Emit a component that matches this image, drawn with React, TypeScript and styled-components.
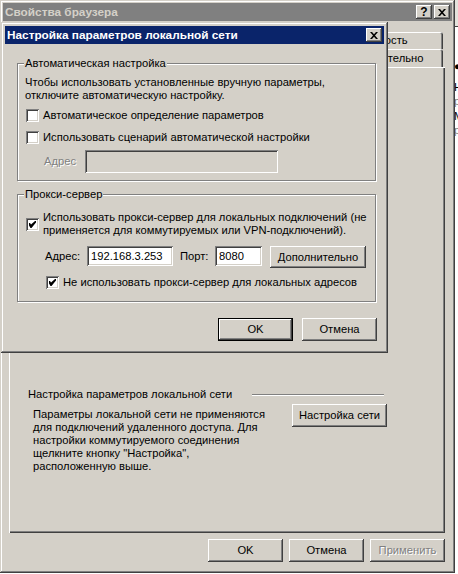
import styled, { createGlobalStyle } from "styled-components";

const FACE = "#d4d0c8";
const SHADOW = "#808080";
const DARK = "#404040";

const GlobalStyle = createGlobalStyle`
  * {
    box-sizing: border-box;
  }
  body {
    margin: 0;
    background: #ffffff;
    font-family: "Liberation Sans", Arial, sans-serif;
    font-size: 11.2px;
    line-height: 13px;
    color: #000;
  }
`;

const Desktop = styled.div`
  position: relative;
  display: flex;
  width: 458px;
  height: 574px;
  overflow: hidden;
`;

const Frame = styled.div<{ $w: number; $h: number }>`
  display: flex;
  flex-direction: column;
  flex: none;
  width: ${(p) => p.$w}px;
  height: ${(p) => p.$h}px;
  padding: 3px;
  background: ${FACE};
  box-shadow: inset -1px -1px ${DARK}, inset 1px 1px ${FACE},
    inset -2px -2px ${SHADOW}, inset 2px 2px #fff;
`;

const Dialog = styled(Frame)`
  position: absolute;
  left: 1px;
  top: 22px;
  padding: 4px;
`;

const TitleBar = styled.div<{ $active?: boolean }>`
  display: flex;
  align-items: center;
  height: 18px;
  padding: 0 2px;
  background: ${(p) => (p.$active ? "#0a246a" : SHADOW)};
  color: ${(p) => (p.$active ? "#fff" : FACE)};
  font-size: 11.8px;
  font-weight: bold;
`;

const TitleText = styled.span`
  flex: 1;
  white-space: nowrap;
  overflow: hidden;
`;

const TitleButtons = styled.div`
  display: flex;
  gap: 2px;
`;

const TitleButton = styled.div`
  display: flex;
  align-items: center;
  justify-content: center;
  width: 16px;
  height: 14px;
  background: ${FACE};
  color: #000;
  font-size: 12px;
  font-weight: bold;
  box-shadow: inset -1px -1px ${DARK}, inset 1px 1px #fff,
    inset -2px -2px ${SHADOW};
`;

const WindowBody = styled.div`
  flex: 1;
  display: flex;
  flex-direction: column;
  padding: 11px 7px 8px 6px;
`;

const TabRow = styled.div<{ $h: number }>`
  display: flex;
  height: ${(p) => p.$h}px;
  margin-right: 2px;
`;

const Tab = styled.div`
  flex: 1 1 auto;
  display: flex;
  align-items: center;
  justify-content: center;
  white-space: nowrap;
  border-radius: 3px 3px 0 0;
  box-shadow: inset 1px 1px #fff, inset -1px 0 ${DARK},
    inset -2px 0 ${SHADOW};
`;

const Panel = styled.div`
  flex: 1;
  display: flex;
  flex-direction: column;
  padding-top: 321px;
  box-shadow: inset 1px 1px #fff, inset -1px -1px ${DARK},
    inset -2px -2px ${SHADOW};
`;

const HeaderRow = styled.div`
  display: flex;
  align-items: center;
  width: 375px;
  padding-left: 19px;
  white-space: nowrap;
`;

const Etched = styled.div<{ $w: number }>`
  width: ${(p) => p.$w}px;
  height: 2px;
  margin-left: auto;
  border-top: 1px solid ${SHADOW};
  border-bottom: 1px solid #fff;
`;

const ContentRow = styled.div`
  display: flex;
  align-items: flex-start;
  margin-top: 3px;
  padding-left: 24px;
`;

const Paragraph = styled.div<{ $w: number }>`
  width: ${(p) => p.$w}px;
  margin-top: 4px;
  white-space: nowrap;
`;

const ButtonRow = styled.div<{ $mt: number; $gap: number; $w?: number }>`
  display: flex;
  justify-content: flex-end;
  gap: ${(p) => p.$gap}px;
  margin-top: ${(p) => p.$mt}px;
  width: ${(p) => (p.$w ? `${p.$w}px` : "auto")};
`;

const Button = styled.button<{ $w: number; $h?: number; $ml?: number; $default?: boolean }>`
  flex: none;
  width: ${(p) => p.$w}px;
  height: ${(p) => p.$h ?? 23}px;
  margin-left: ${(p) => p.$ml ?? 0}px;
  padding: 0;
  font: inherit;
  color: ${(p) => (p.disabled ? SHADOW : "#000")};
  text-shadow: ${(p) => (p.disabled ? "1px 1px #fff" : "none")};
  background: ${FACE};
  border: ${(p) => (p.$default ? "1px solid #000" : "none")};
  box-shadow: inset -1px -1px ${DARK}, inset 1px 1px #fff,
    inset -2px -2px ${SHADOW}, inset 2px 2px ${FACE};
`;

const DialogBody = styled.div`
  display: flex;
  flex-direction: column;
  width: 372px;
  padding: 13px 0 0 12px;
`;

const Group = styled.fieldset<{ $pt: number; $pb: number; $mt?: number }>`
  display: flex;
  flex-direction: column;
  align-items: flex-start;
  width: 359px;
  min-width: 0;
  margin: ${(p) => p.$mt ?? 0}px 0 0;
  padding: ${(p) => p.$pt}px 7px ${(p) => p.$pb}px;
  border: 1px solid ${SHADOW};
  box-shadow: inset 1px 1px #fff, 1px 1px #fff;
`;

const Legend = styled.legend`
  margin-left: -1px;
  padding: 0 1px;
  background: ${FACE};
  line-height: 13px;
`;

const Text = styled.div`
  white-space: nowrap;
`;

const CheckRow = styled.label<{ $mt: number; $indent: number }>`
  display: flex;
  align-items: center;
  gap: 4px;
  margin: ${(p) => p.$mt}px 0 0 ${(p) => p.$indent}px;
  white-space: nowrap;
`;

const Box = styled.span`
  display: flex;
  align-items: center;
  justify-content: center;
  flex: none;
  width: 13px;
  height: 13px;
  background: #fff;
  box-shadow: inset 1px 1px ${SHADOW}, inset -1px -1px #fff,
    inset 2px 2px ${DARK}, inset -2px -2px ${FACE};
`;

const FieldRow = styled.div<{ $mt: number; $indent: number }>`
  display: flex;
  align-items: flex-start;
  margin: ${(p) => p.$mt}px 0 0 ${(p) => p.$indent}px;
`;

const FieldLabel = styled.span<{ $w: number; $h: number; $ml?: number; $disabled?: boolean }>`
  display: flex;
  align-items: center;
  width: ${(p) => p.$w}px;
  height: ${(p) => p.$h}px;
  margin-left: ${(p) => p.$ml ?? 0}px;
  color: ${(p) => (p.$disabled ? SHADOW : "#000")};
  text-shadow: ${(p) => (p.$disabled ? "1px 1px #fff" : "none")};
`;

const Field = styled.input<{ $w: number; $h: number }>`
  width: ${(p) => p.$w}px;
  height: ${(p) => p.$h}px;
  padding: 0 4px;
  border: none;
  outline: none;
  font: inherit;
  color: #000;
  background: ${(p) => (p.disabled ? FACE : "#fff")};
  box-shadow: inset 1px 1px ${SHADOW}, inset -1px -1px #fff,
    inset 2px 2px ${DARK}, inset -2px -2px ${FACE};
`;

const Behind = styled.div`
  flex: 1;
  display: flex;
  flex-direction: column;
  overflow: hidden;
  background: #fff;
`;

const BehindTop = styled.div`
  height: 27px;
  background: #e4e2dc;
  border-bottom: 1px solid ${DARK};
`;

const BehindLine = styled.div<{ $mt: number; $color?: string }>`
  margin: ${(p) => p.$mt}px 0 0 -1px;
  white-space: nowrap;
  color: ${(p) => p.$color ?? "#000"};
`;

const Checkbox = ({ checked }: { checked?: boolean }) => (
  <Box>
    {checked && (
      <svg width="7" height="7" viewBox="0 0 7 7">
        <path d="M0 2h1l1 1.5L6 0h1v1.5L2.5 7h-1L0 4.5z" fill="#000" />
      </svg>
    )}
  </Box>
);

const CloseGlyph = () => (
  <svg width="8" height="7" viewBox="0 0 8 7">
    <path d="M0 0h2l2 2.2L6 0h2L5 3.5 8 7H6L4 4.8 2 7H0l3-3.5z" fill="#000" />
  </svg>
);

const App = () => {
  return (
    <>
      <GlobalStyle />
      <Desktop>
        <Frame $w={455} $h={573}>
          <TitleBar>
            <TitleText>Свойства браузера</TitleText>
            <TitleButtons>
              <TitleButton>?</TitleButton>
              <TitleButton>
                <CloseGlyph />
              </TitleButton>
            </TitleButtons>
          </TitleBar>
          <WindowBody>
            <TabRow $h={17}>
              <Tab>Общие</Tab>
              <Tab>Безопасность</Tab>
              <Tab>Конфиденциальность</Tab>
            </TabRow>
            <TabRow $h={18}>
              <Tab>Содержание</Tab>
              <Tab>Подключения</Tab>
              <Tab>Программы</Tab>
              <Tab>Дополнительно</Tab>
            </TabRow>
            <Panel>
              <HeaderRow>
                Настройка параметров локальной сети
                <Etched $w={132} />
              </HeaderRow>
              <ContentRow>
                <Paragraph $w={259}>
                  Параметры локальной сети не применяются
                  <br />
                  для подключений удаленного доступа. Для
                  <br />
                  настройки коммутируемого соединения
                  <br />
                  щелкните кнопку "Настройка",
                  <br />
                  расположенную выше.
                </Paragraph>
                <Button $w={95}>Настройка сети</Button>
              </ContentRow>
            </Panel>
            <ButtonRow $mt={6} $gap={6}>
              <Button $w={75}>OK</Button>
              <Button $w={75}>Отмена</Button>
              <Button $w={75} disabled>
                Применить
              </Button>
            </ButtonRow>
          </WindowBody>
        </Frame>

        <Behind>
          <BehindTop />
          <BehindLine $mt={33}>●</BehindLine>
          <BehindLine $mt={8}>Настройка</BehindLine>
          <BehindLine $mt={1} $color={SHADOW}>
            рабочего
          </BehindLine>
          <BehindLine $mt={2}>Модем</BehindLine>
          <BehindLine $mt={1} $color={SHADOW}>
            рабочего
          </BehindLine>
        </Behind>

        <Dialog $w={387} $h={331}>
          <TitleBar $active>
            <TitleText>Настройка параметров локальной сети</TitleText>
            <TitleButtons>
              <TitleButton>
                <CloseGlyph />
              </TitleButton>
            </TitleButtons>
          </TitleBar>
          <DialogBody>
            <Group $pt={6} $pb={7}>
              <Legend>Автоматическая настройка</Legend>
              <Text>
                Чтобы использовать установленные вручную параметры,
                <br />
                отключите автоматическую настройку.
              </Text>
              <CheckRow $mt={7} $indent={1}>
                <Checkbox />
                Автоматическое определение параметров
              </CheckRow>
              <CheckRow $mt={9} $indent={1}>
                <Checkbox />
                Использовать сценарий автоматической настройки
              </CheckRow>
              <FieldRow $mt={6} $indent={19}>
                <FieldLabel $w={41} $h={23} $disabled>
                  Адрес
                </FieldLabel>
                <Field $w={193} $h={23} disabled />
              </FieldRow>
            </Group>

            <Group $pt={10} $pb={12} $mt={7}>
              <Legend>Прокси-сервер</Legend>
              <CheckRow $mt={0} $indent={1}>
                <Checkbox checked />
                <span>
                  Использовать прокси-сервер для локальных подключений (не
                  <br />
                  применяется для коммутируемых или VPN-подключений).
                </span>
              </CheckRow>
              <FieldRow $mt={9} $indent={20}>
                <FieldLabel $w={42} $h={20}>
                  Адрес:
                </FieldLabel>
                <Field $w={86} $h={20} readOnly value="192.168.3.253" />
                <FieldLabel $w={35} $h={20} $ml={7}>
                  Порт:
                </FieldLabel>
                <Field $w={47} $h={20} readOnly value="8080" />
                <Button $w={96} $h={22} $ml={8}>
                  Дополнительно
                </Button>
              </FieldRow>
              <CheckRow $mt={8} $indent={21}>
                <Checkbox checked />
                Не использовать прокси-сервер для локальных адресов
              </CheckRow>
            </Group>

            <ButtonRow $mt={16} $gap={9} $w={360}>
              <Button $w={75} $default>
                OK
              </Button>
              <Button $w={75}>Отмена</Button>
            </ButtonRow>
          </DialogBody>
        </Dialog>
      </Desktop>
    </>
  );
};

export default App;
